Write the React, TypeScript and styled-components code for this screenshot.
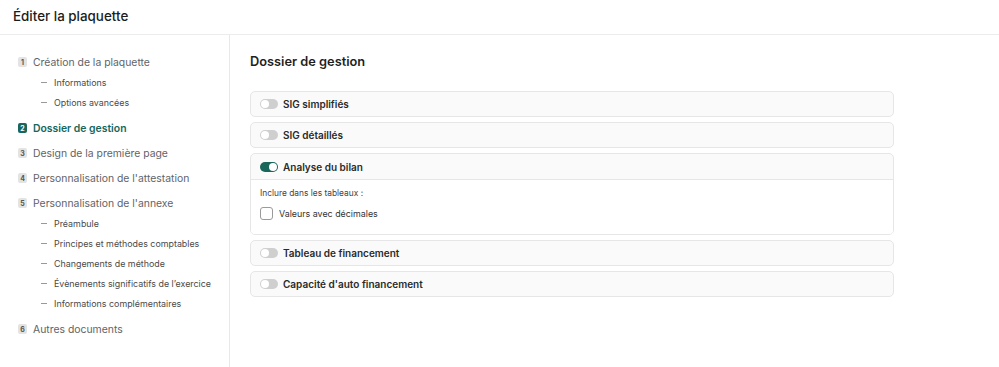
import React, { useState } from 'react';
import styled, { createGlobalStyle } from 'styled-components';

const TEAL = '#19665b';
const BORDER = '#e6e6e6';
const TEXT = '#222';
const TEXT_MUTED = '#5f6368';

const GlobalStyle = createGlobalStyle`
  html, body { margin: 0; padding: 0; background: #fff; }
  body { font-family: Inter, "Noto Sans", Arial, sans-serif; color: ${TEXT}; }
  * { box-sizing: border-box; }
`;

const Page = styled.div` width: 999px; height: 367px; display: flex; flex-direction: column; overflow: hidden; `;
const Header = styled.header`
  height: 35px; flex: none; display: flex; align-items: center; padding: 0 13px 2px;
  border-bottom: 1px solid #ececec; font-size: 13.4px; font-weight: 500; color: #1c1c1c;
`;
const Body = styled.div` flex: 1; display: flex; min-height: 0; `;
const Sidebar = styled.nav`
  width: 230px; flex: none; border-right: 1px solid #e8e8e8; padding: 12px 0 0 18px;
  display: flex; flex-direction: column;
`;
const Step = styled.div<{ $active?: boolean }>`
  display: flex; align-items: center; gap: 6px; height: 20px; margin-top: 5px; white-space: nowrap;
  font-size: 10.4px; color: ${p => p.$active ? TEAL : TEXT_MUTED}; font-weight: ${p => p.$active ? 600 : 400};
`;
const Badge = styled.span<{ $active?: boolean }>`
  width: 9px; height: 10px; border-radius: 2px; display: inline-flex; align-items: center; justify-content: center;
  font-size: 7px; font-weight: 700; line-height: 1;
  background: ${p => p.$active ? TEAL : '#e3e3e3'}; color: ${p => p.$active ? '#fff' : '#555'};
`;
const SubList = styled.div` display: flex; flex-direction: column; padding-left: 23px; margin-bottom: 1px; `;
const SubItem = styled.div`
  display: flex; align-items: center; gap: 7px; height: 20px; font-size: 8.9px; color: #4a4a4a; white-space: nowrap;
  &::before { content: ''; width: 6px; height: 1px; background: #999; }
`;
const Main = styled.main` flex: 1; padding: 17px 0 0 20px; `;
const Title = styled.h2` margin: 0 0 19px; font-size: 12.8px; font-weight: 600; color: #1f1f1f; height: 20px; line-height: 20px; `;
const Cards = styled.div` width: 644px; display: flex; flex-direction: column; gap: 5px; `;
const Card = styled.div` border: 1px solid ${BORDER}; border-radius: 5px; background: #fafafa; overflow: hidden; `;
const CardHead = styled.div<{ $open?: boolean }>`
  height: ${p => p.$open ? 26 : 24}px; display: flex; align-items: center; gap: 5px; padding: 0 9px;
  font-size: 10px; font-weight: 600; color: #2a2a2a;
  border-bottom: ${p => p.$open ? `1px solid ${BORDER}` : 'none'};
`;
const Toggle = styled.span<{ $on?: boolean }>`
  position: relative; width: 18px; height: 10px; border-radius: 5px; flex: none;
  background: ${p => p.$on ? TEAL : '#cfcfcf'};
  &::after {
    content: ''; position: absolute; top: 1px; ${p => p.$on ? 'right: 1px;' : 'left: 1px;'}
    width: 8px; height: 8px; border-radius: 50%; background: #fff;
  }
`;
const CardBody = styled.div` background: #fff; height: 54px; padding: 7px 9px 0; display: flex; flex-direction: column; gap: 8px; `;
const Hint = styled.div` font-size: 8.4px; line-height: 12px; color: #444; `;
const CheckRow = styled.label` display: flex; align-items: center; gap: 6px; font-size: 8.9px; color: #333; `;
const Box = styled.span`
  width: 13px; height: 13px; border: 1px solid #9a9a9a; border-radius: 3px; background: #fff;
`;

const subs1 = ['Informations', 'Options avancées'];
const subs5 = ['Préambule', 'Principes et méthodes comptables', 'Changements de méthode', 'Évènements significatifs de l\u2019exercice', 'Informations complémentaires'];

export default function App() {
  const [open] = useState('Analyse du bilan');
  const items = ['SIG simplifiés', 'SIG détaillés', 'Analyse du bilan', 'Tableau de financement', "Capacité d'auto financement"];
  return (
    <Page>
      <GlobalStyle />
      <Header>Éditer la plaquette</Header>
      <Body>
        <Sidebar>
          <Step><Badge>1</Badge>Création de la plaquette</Step>
          <SubList>{subs1.map(s => <SubItem key={s}>{s}</SubItem>)}</SubList>
          <Step $active><Badge $active>2</Badge>Dossier de gestion</Step>
          <Step><Badge>3</Badge>Design de la première page</Step>
          <Step><Badge>4</Badge>Personnalisation de l'attestation</Step>
          <Step><Badge>5</Badge>Personnalisation de l'annexe</Step>
          <SubList>{subs5.map(s => <SubItem key={s}>{s}</SubItem>)}</SubList>
          <Step><Badge>6</Badge>Autres documents</Step>
        </Sidebar>
        <Main>
          <Title>Dossier de gestion</Title>
          <Cards>
            {items.map(it => (
              <Card key={it}>
                <CardHead $open={it === open}><Toggle $on={it === open} />{it}</CardHead>
                {it === open && (
                  <CardBody>
                    <Hint>Inclure dans les tableaux :</Hint>
                    <CheckRow><Box />Valeurs avec décimales</CheckRow>
                  </CardBody>
                )}
              </Card>
            ))}
          </Cards>
        </Main>
      </Body>
    </Page>
  );
}
